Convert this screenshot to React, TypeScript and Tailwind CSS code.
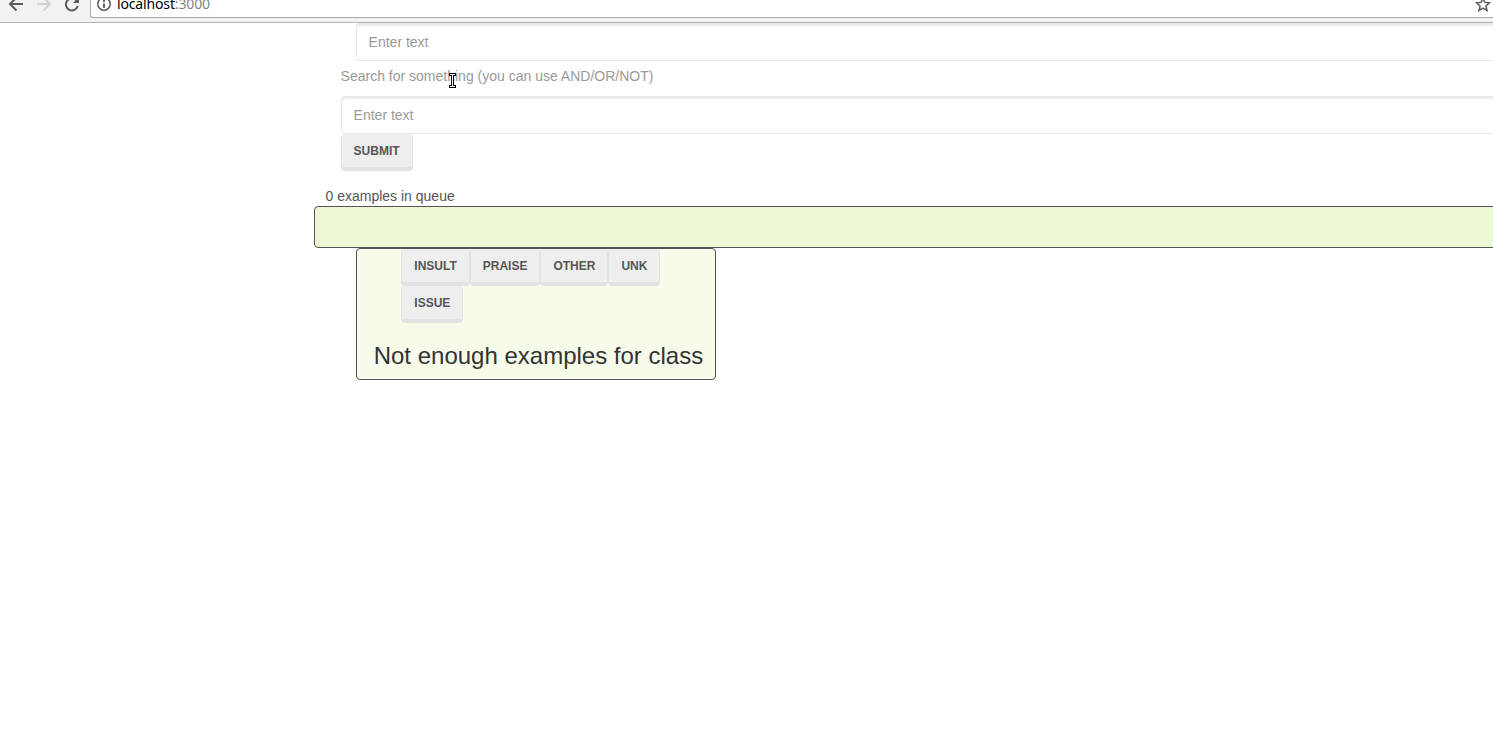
import type { ReactNode } from "react";

function Button({ children }: { children: ReactNode }) {
  return (
    <button
      type="button"
      className="h-[37px] shrink-0 rounded-[4px] border-x border-b-4 border-[#e2e2e2] bg-[#eeeeee] px-3 pt-0.5 text-center text-[12px] leading-[17px] font-bold whitespace-nowrap text-[#555555] uppercase"
    >
      {children}
    </button>
  );
}

function TextInput() {
  return (
    <input
      type="text"
      placeholder="Enter text"
      className="block h-[38px] w-full rounded-[4px] border border-[#e7e7e7] bg-white px-3 text-[14px] leading-5 text-[#555555] shadow-[inset_0_2px_0_rgba(0,0,0,0.075)] placeholder:text-[#999999] placeholder:opacity-100"
    />
  );
}

function BrowserBar() {
  return (
    <header className="flex h-[23px] items-start overflow-hidden border-b border-[#b2b2b2] bg-[#f2f2f2]">
      <svg className="h-[18px] w-[90px] shrink-0" viewBox="0 0 90 18" fill="none" strokeWidth="2">
        <path d="M23 4H10.5M16.5 -2.5L10 4L16.5 10.5" stroke="#5a5a5a" />
        <path d="M37 4H49.5M43.5 -2.5L50 4L43.5 10.5" stroke="#d2d2d2" />
        <path d="M76.3 0.3A6 6 0 1 0 77.7 6" stroke="#5a5a5a" />
        <path d="M79 -3V3H73Z" fill="#5a5a5a" />
      </svg>
      <div className="flex h-[18px] min-w-0 flex-1 items-start rounded-bl-[3px] border-b border-l border-[#a8a8a8] bg-white">
        <svg className="ml-[5px] h-[14px] w-4 shrink-0" viewBox="0 0 16 14" fill="none">
          <circle cx="8" cy="4" r="6.2" stroke="#5a5a5a" strokeWidth="1.5" />
          <path d="M8 3.5V8M8 0V2" stroke="#5a5a5a" strokeWidth="1.8" />
        </svg>
        <span className="-mt-[6px] ml-[5px] font-['Noto_Sans',sans-serif] text-[14px] leading-5 tracking-[-0.15px] whitespace-nowrap text-black">
          localhost<span className="text-[#7f8487]">:3000</span>
        </span>
        <svg className="mr-[2px] ml-auto h-[14px] w-4 shrink-0" viewBox="0 0 16 14" fill="none">
          <path
            d="M8 -2L9.8 2.4L14.5 2.8L10.9 5.9L12 10.4L8 8L4 10.4L5.1 5.9L1.5 2.8L6.2 2.4Z"
            stroke="#5a5a5a"
            strokeWidth="1.5"
          />
        </svg>
      </div>
    </header>
  );
}

export default function App() {
  return (
    <div className="h-[735px] w-full overflow-hidden bg-white font-['Liberation_Sans',Arial,sans-serif] text-[14px] leading-5 text-[#555555]">
      <BrowserBar />
      <main className="ml-[314px] w-[1200px]">
        <form className="pl-[26.6px]">
          <div className="pl-[15px]">
            <TextInput />
          </div>
          <div className="relative mt-[5px] mb-[10px] text-[#999999]">
            Search for something (you can use AND/OR/NOT)
            <svg className="absolute top-[5px] left-[107.4px] h-[18px] w-[10px]" viewBox="0 0 10 18" fill="none">
              <path d="M1 3.5H8M4.5 3V16M1 15.5H8" stroke="black" strokeWidth="3" />
              <path d="M2 3.5H7M4.5 3V16M2 15.5H7" stroke="white" strokeWidth="1" />
            </svg>
          </div>
          <TextInput />
          <Button>Submit</Button>
        </form>
        <p className="mt-[15px] pl-[11.5px]">0 examples in queue</p>
        <section className="h-[42px] rounded-[4px] border border-[#555555] bg-[#ecf8d4]" />
        <section className="ml-[42px] h-[132px] w-[360px] rounded-[4px] border border-[#555555] bg-[#f7fbea]">
          <div className="ml-[44.3px] flex w-[270px] flex-wrap">
            <Button>Insult</Button>
            <Button>Praise</Button>
            <Button>Other</Button>
            <Button>Unk</Button>
            <Button>Issue</Button>
          </div>
          <h3 className="mt-5 pl-[16.7px] text-[24px] leading-[26px] whitespace-nowrap text-[#333333]">
            Not enough examples for class
          </h3>
        </section>
      </main>
    </div>
  );
}
